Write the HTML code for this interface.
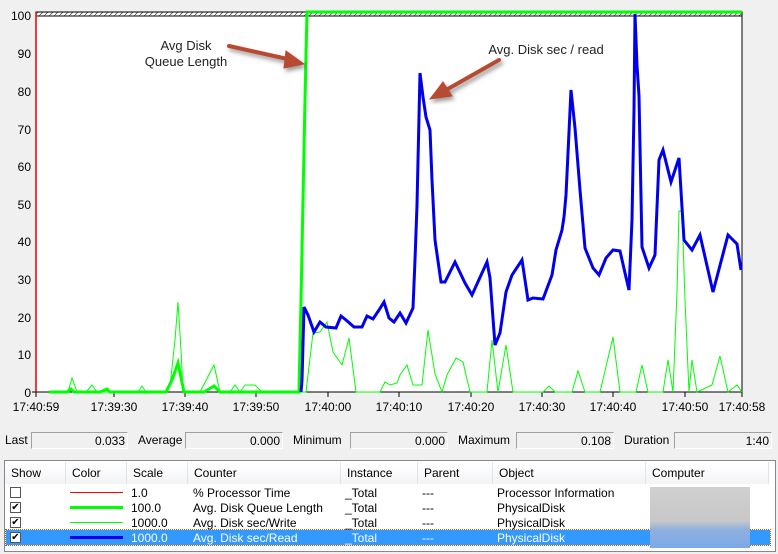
<!DOCTYPE html>
<html><head><meta charset="utf-8"><style>
body{margin:0;width:778px;height:554px;background:#f0f0f0;font-family:"Liberation Sans",sans-serif;font-size:12px;color:#000;position:relative;overflow:hidden}
.a{position:absolute;white-space:nowrap}
.box{position:absolute;height:17px;border:1px solid #fff;border-top-color:#a0a0a0;border-left-color:#a0a0a0;background:#f0f0f0;text-align:right;line-height:17px;box-sizing:border-box;padding-right:2px}
.tbl{position:absolute;left:4px;top:460px;width:772px;height:92px;border:1px solid #828790;background:#fff;box-sizing:border-box}
.hd{position:absolute;top:462px;height:22px;line-height:22px;background:linear-gradient(#fff,#f3f4f6);border-right:1px solid #e0e3e8;box-sizing:border-box;padding-left:6px}
.cb{position:absolute;width:11px;height:11px;border:1px solid #555;background:#fff;font-size:10px;line-height:10px;text-align:center;box-sizing:border-box}
</style></head><body>
<svg class="a" style="left:0;top:0" width="778" height="420">
<defs><pattern id="h" width="5" height="5" patternUnits="userSpaceOnUse"><rect width="5" height="5" fill="#fff"/><path d="M0 5L5 0" stroke="#555" stroke-width="0.8"/></pattern>
<filter id="sh"><feDropShadow dx="2" dy="3" stdDeviation="2" flood-color="#000" flood-opacity="0.4"/></filter></defs>
<rect x="36" y="12" width="706" height="380" fill="#fff" stroke="#000"/>
<rect x="36" y="12" width="706" height="4" fill="url(#h)" stroke="#000" stroke-width="1"/>
<line x1="36" y1="12" x2="36" y2="392" stroke="#e00" stroke-width="1.5"/>
<g font-family="Liberation Sans" font-size="12" text-anchor="end" fill="#000">
<text x="31" y="20">100</text><text x="31" y="58">90</text><text x="31" y="96">80</text><text x="31" y="134">70</text><text x="31" y="171">60</text><text x="31" y="209">50</text><text x="31" y="246">40</text><text x="31" y="284">30</text><text x="31" y="322">20</text><text x="31" y="359">10</text><text x="31" y="397">0</text>
</g>
<g stroke="#000"><line x1="32" y1="392" x2="36" y2="392"/><line x1="36" y1="392" x2="36" y2="397"/><line x1="114" y1="392" x2="114" y2="397"/><line x1="185" y1="392" x2="185" y2="397"/><line x1="256" y1="392" x2="256" y2="397"/><line x1="328" y1="392" x2="328" y2="397"/><line x1="399" y1="392" x2="399" y2="397"/><line x1="471" y1="392" x2="471" y2="397"/><line x1="542" y1="392" x2="542" y2="397"/><line x1="613" y1="392" x2="613" y2="397"/><line x1="685" y1="392" x2="685" y2="397"/><line x1="742" y1="392" x2="742" y2="397"/></g>
<g font-family="Liberation Sans" font-size="12" text-anchor="middle"><text x="36" y="411">17:40:59</text><text x="114" y="411">17:39:30</text><text x="185" y="411">17:39:40</text><text x="256" y="411">17:39:50</text><text x="328" y="411">17:40:00</text><text x="399" y="411">17:40:10</text><text x="471" y="411">17:40:20</text><text x="542" y="411">17:40:30</text><text x="613" y="411">17:40:40</text><text x="685" y="411">17:40:50</text><text x="742" y="411">17:40:58</text></g>
<polyline fill="none" stroke="#00ff00" stroke-width="1" points="49,392 68,392 72,378 77,392 86,392 92,385 97,392 138,392 142,386 146,392 165,392 170,386 175,340 178,302 181,350 183,392 200,392 214,365 220,392 230,392 235,385 240,392 245,385 255,385 262,392 306,392 313,333 320,332 327,322 333,352 342,365 349,338 356,392 380,392 385,382 390,385 397,383 400,375 407,365 413,385 422,385 428,330 435,374 442,392 447,375 456,358 463,362 470,392 487,392 492,340 498,392 506,345 513,392 543,392 549,386 555,392 572,392 578,371 585,392 600,392 613,337 620,392 636,392 642,365 648,392 663,392 668,360 673,392 677,292 679,211 682,211 685,300 689,392 692,360 697,392 712,385 720,356 728,392 737,385 742,392"/>
<polyline fill="none" stroke="#00ff00" stroke-width="3" points="49,392 67,392 71,389 74,392 100,392 107,389 110,392 166,392 172,380 178,363 184,392 204,392 214,386 220,392 299,392 301,300 303,200 305,100 307,12 742,12"/>
<polyline fill="none" stroke="#0000ee" stroke-width="3" stroke-linejoin="miter" points="301,392 302,380 304,307 308,315 314,332 320,322 326,327 336,328 341,316 346,320 354,327 362,327 367,316 373,319 379,310 384,302 389,318 394,322 400,313 406,323 413,308 415,260 417,205 420,73 423,97 426,117 430,130 432,180 435,240 441,282 445,282 455,262 465,283 472,295 487,262 490,278 495,345 500,333 506,292 512,275 522,260 528,300 533,298 543,299 552,275 556,250 562,230 564,217 566,195 571,90 575,128 580,190 585,248 593,268 599,275 606,258 613,250 620,251 625,273 629,290 632,220 634,110 635,14 637,65 639,96 642,247 649,268 655,255 659,160 663,150 671,182 679,158 684,240 692,250 700,235 713,292 728,235 737,244 741,270"/>
<g font-family="Liberation Sans" font-size="13" fill="#222" text-anchor="middle"><text x="186" y="50">Avg Disk</text><text x="186" y="66">Queue Length</text><text x="546" y="54">Avg. Disk sec / read</text></g>
<g filter="url(#sh)" fill="#b84a30" stroke="#b84a30">
<line x1="229" y1="46" x2="292" y2="60" stroke-width="4" stroke-linecap="round"/>
<polygon points="304,64 286,51 284,68" stroke-width="1"/>
<line x1="499" y1="60" x2="446" y2="90" stroke-width="4" stroke-linecap="round"/>
<polygon points="430,99 443,82 452,96" stroke-width="1"/>
</g>
</svg>
<div class="a" style="left:5px;top:433px">Last</div><div class="box" style="left:31px;top:432px;width:97px">0.033</div>
<div class="a" style="left:138px;top:433px">Average</div><div class="box" style="left:185px;top:432px;width:98px">0.000</div>
<div class="a" style="left:293px;top:433px">Minimum</div><div class="box" style="left:350px;top:432px;width:98px">0.000</div>
<div class="a" style="left:458px;top:433px">Maximum</div><div class="box" style="left:516px;top:432px;width:98px">0.108</div>
<div class="a" style="left:624px;top:433px">Duration</div><div class="box" style="left:674px;top:432px;width:98px">1:40</div>
<div class="tbl"></div>
<div class="hd" style="left:5px;width:61px">Show</div>
<div class="hd" style="left:66px;width:61px">Color</div>
<div class="hd" style="left:127px;width:61px">Scale</div>
<div class="hd" style="left:188px;width:153px">Counter</div>
<div class="hd" style="left:341px;width:77px">Instance</div>
<div class="hd" style="left:418px;width:75px">Parent</div>
<div class="hd" style="left:493px;width:153px">Object</div>
<div class="hd" style="left:646px;width:123px">Computer</div>
<div class="a" style="left:6px;top:530px;width:764px;height:15px;background:#3399ff;outline:1px dotted #c06000"></div>
<div class="cb" style="left:10px;top:487px"></div>
<div class="cb" style="left:10px;top:502px">✔</div>
<div class="cb" style="left:10px;top:517px">✔</div>
<div class="cb" style="left:10px;top:532px">✔</div>
<div class="a" style="left:70px;top:492px;width:53px;height:1px;background:#f00"></div>
<div class="a" style="left:70px;top:506px;width:53px;height:3px;background:#0f0"></div>
<div class="a" style="left:70px;top:522px;width:53px;height:1px;background:#0f0"></div>
<div class="a" style="left:70px;top:536px;width:53px;height:3px;background:#0000ee"></div>
<div class="a" style="left:131px;top:486px">1.0</div><div class="a" style="left:131px;top:501px">100.0</div><div class="a" style="left:131px;top:516px">1000.0</div><div class="a" style="left:131px;top:531px;color:#fff">1000.0</div>
<div class="a" style="left:193px;top:486px">% Processor Time</div><div class="a" style="left:193px;top:501px">Avg. Disk Queue Length</div><div class="a" style="left:193px;top:516px">Avg. Disk sec/Write</div><div class="a" style="left:193px;top:531px;color:#fff">Avg. Disk sec/Read</div>
<div class="a" style="left:345px;top:486px">_Total</div><div class="a" style="left:345px;top:501px">_Total</div><div class="a" style="left:345px;top:516px">_Total</div><div class="a" style="left:345px;top:531px;color:#fff">_Total</div>
<div class="a" style="left:422px;top:486px">---</div><div class="a" style="left:422px;top:501px">---</div><div class="a" style="left:422px;top:516px">---</div><div class="a" style="left:422px;top:531px;color:#fff">---</div>
<div class="a" style="left:497px;top:486px">Processor Information</div><div class="a" style="left:497px;top:501px">PhysicalDisk</div><div class="a" style="left:497px;top:516px">PhysicalDisk</div><div class="a" style="left:497px;top:531px;color:#fff">PhysicalDisk</div>
<div class="a" style="left:650px;top:487px;width:100px;height:61px;background:linear-gradient(#d0d0d0,#c8c8c8 55%,#8fb0de 70%,#7ca8e8)"></div>
</body></html>
